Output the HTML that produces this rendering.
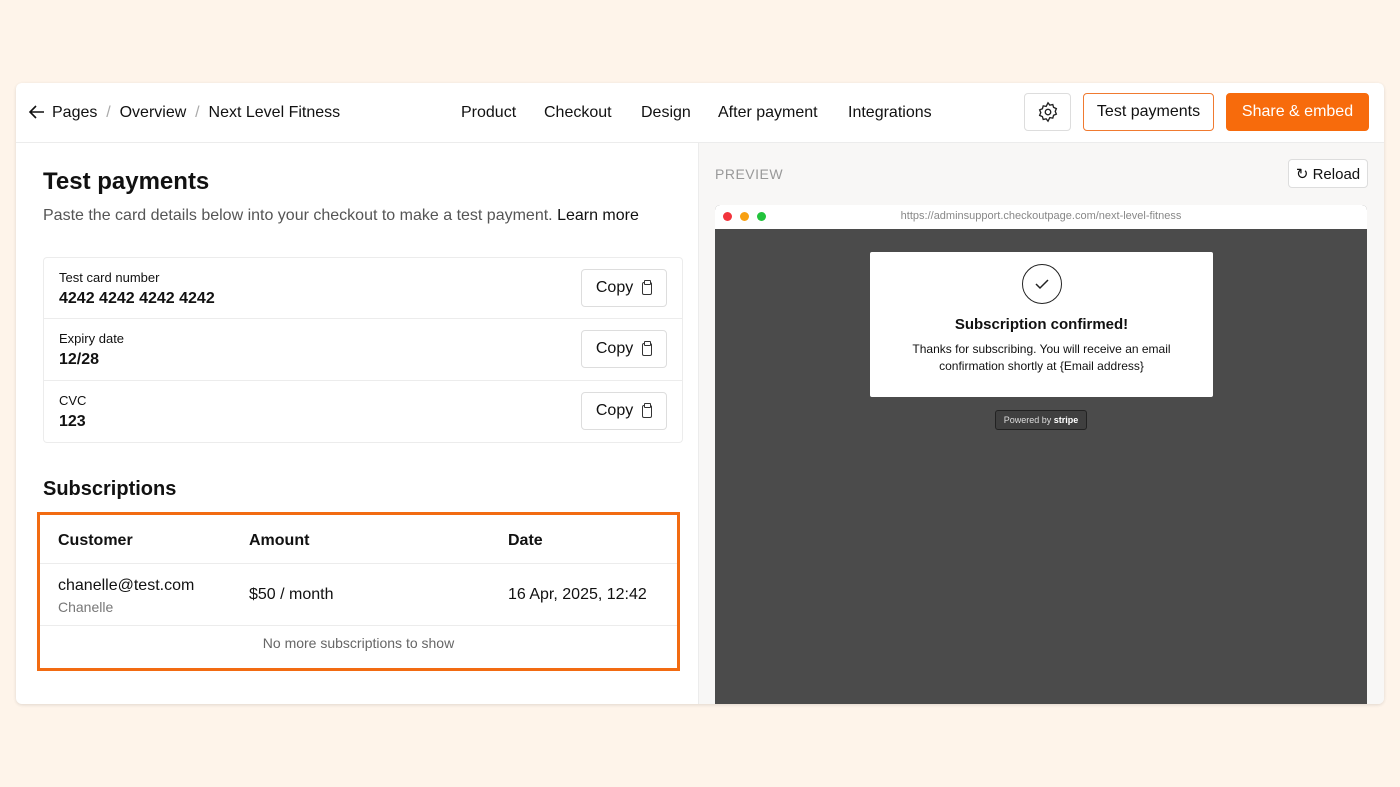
<!DOCTYPE html><html><head><style>
*{box-sizing:border-box;margin:0;padding:0}
body{width:1400px;height:787px;background:#fef4ea;font-family:"Liberation Sans",sans-serif;color:#111;position:relative;overflow:hidden}
.card{position:absolute;left:16px;top:83px;width:1368px;height:621px;background:#fff;border-radius:6px;box-shadow:0 1px 3px rgba(0,0,0,.12);overflow:hidden}
.hdr{position:absolute;left:0;top:0;width:100%;height:60px;border-bottom:1px solid #ececec}
.a{position:absolute;font-size:16px;top:21px}
.gray{color:#aaa}
.btn{position:absolute;border:1px solid #ddd;border-radius:4px;background:#fff;display:flex;align-items:center;justify-content:center;font-size:16px}
.right{position:absolute;left:682px;top:60px;right:0;bottom:0;background:#f8f7f6;border-left:1px solid #ececec}
.row{position:absolute;left:27px;width:640px;height:62px;border:1px solid #ececec}
.row .l{position:absolute;left:15px;top:12px;font-size:13px}
.row .v{position:absolute;left:15px;top:32px;font-size:16px;font-weight:bold}
.row .btn{right:15px;top:11px;width:86px;height:38px}
.clip{display:inline-block;width:10px;height:13px;border:1.5px solid #333;border-radius:2px;position:relative}
.clip:after{content:"";position:absolute;left:1px;top:-3px;width:5px;height:3px;border:1.2px solid #333;background:#fff;border-radius:1px}
</style></head><body>
<div class="card">
<div class="hdr">
<svg style="position:absolute;left:12px;top:21px" width="18" height="16" viewBox="0 0 18 16"><path d="M16 8H2M8 2L2 8l6 6" stroke="#111" stroke-width="1.6" fill="none"/></svg>
<div class="a" style="left:36px">Pages <span class="gray">&nbsp;/&nbsp;</span> Overview <span class="gray">&nbsp;/&nbsp;</span> Next Level Fitness</div>
<div class="a" style="left:445px">Product</div>
<div class="a" style="left:528px">Checkout</div>
<div class="a" style="left:625px">Design</div>
<div class="a" style="left:702px">After payment</div>
<div class="a" style="left:832px">Integrations</div>
<div class="btn" style="left:1008px;top:10px;width:47px;height:38px"><svg width="22" height="22" viewBox="0 0 24 24" fill="none" stroke="#222" stroke-width="1.5"><circle cx="12" cy="12" r="3"/><path d="M12 2l2 2.5 3.2-.6.9 3.1 3 1.3-1.2 3 1.2 3-3 1.300-.9 3.1-3.2-.6L12 22l-2-2.5-3.2.6-.9-3.1-3-1.3 1.2-3-1.2-3 3-1.3.9-3.1 3.2.6z"/></svg></div>
<div class="btn" style="left:1067px;top:10px;width:131px;height:38px;border-color:#f07a30">Test payments</div>
<div class="btn" style="left:1210px;top:10px;width:143px;height:38px;background:#f76b0c;border-color:#f76b0c;color:#fff">Share &amp; embed</div>
</div>
<div style="position:absolute;left:27px;top:85px;font-size:24px;font-weight:bold">Test payments</div>
<div style="position:absolute;left:27px;top:124px;font-size:16px;color:#555">Paste the card details below into your checkout to make a test payment. <span style="color:#111">Learn more</span></div>
<div class="row" style="top:174px;border-radius:4px 4px 0 0"><div class="l">Test card number</div><div class="v">4242 4242 4242 4242</div><div class="btn">Copy&nbsp;&nbsp;<span class="clip"></span></div></div>
<div class="row" style="top:236px;border-top:none;height:62px"><div class="l">Expiry date</div><div class="v">12/28</div><div class="btn">Copy&nbsp;&nbsp;<span class="clip"></span></div></div>
<div class="row" style="top:298px;border-top:none;border-radius:0 0 4px 4px"><div class="l">CVC</div><div class="v">123</div><div class="btn">Copy&nbsp;&nbsp;<span class="clip"></span></div></div>
<div style="position:absolute;left:27px;top:395px;font-size:20px;font-weight:bold">Subscriptions</div>
<div style="position:absolute;left:21px;top:429px;width:643px;height:159px;border:3px solid #f26b12">
<div style="position:absolute;left:0;right:0;top:0;height:49px;border-bottom:1px solid #ececec;font-size:16px;font-weight:bold">
<span style="position:absolute;left:18px;top:17px">Customer</span><span style="position:absolute;left:209px;top:17px">Amount</span><span style="position:absolute;left:468px;top:17px">Date</span></div>
<div style="position:absolute;left:18px;top:62px;font-size:16px">chanelle@test.com</div>
<div style="position:absolute;left:18px;top:84px;font-size:14px;color:#777">Chanelle</div>
<div style="position:absolute;left:209px;top:71px;font-size:16px">$50 / month</div>
<div style="position:absolute;left:468px;top:71px;font-size:16px">16 Apr, 2025, 12:42</div>
<div style="position:absolute;left:0;right:0;top:110px;border-top:1px solid #ececec;text-align:center;font-size:14px;color:#666;padding-top:9px">No more subscriptions to show</div>
</div>
<div class="right">
<div style="position:absolute;left:16px;top:23px;font-size:14px;color:#999;letter-spacing:.5px">PREVIEW</div>
<div class="btn" style="right:16px;top:16px;width:80px;height:29px;font-size:15px">&#x21bb; Reload</div>
<div style="position:absolute;left:16px;top:62px;width:652px;height:499px;background:#4b4b4b;border-radius:5px 5px 0 0;overflow:hidden">
<div style="height:24px;background:#fff;position:relative">
<span style="position:absolute;left:8px;top:7px;width:9px;height:9px;border-radius:50%;background:#f2343c"></span>
<span style="position:absolute;left:25px;top:7px;width:9px;height:9px;border-radius:50%;background:#f8a012"></span>
<span style="position:absolute;left:42px;top:7px;width:9px;height:9px;border-radius:50%;background:#22c33c"></span>
<div style="text-align:center;font-size:11px;color:#888;padding-top:5px">https://adminsupport.checkoutpage.com/next-level-fitness</div></div>
<div style="position:absolute;left:155px;top:47px;width:343px;height:145px;background:#fff;border-radius:2px;text-align:center">
<div style="margin:12px auto 0;width:40px;height:40px;border:1.5px solid #222;border-radius:50%;display:flex;align-items:center;justify-content:center"><svg width="16" height="12" viewBox="0 0 16 12"><path d="M2 6l4 4 8-8" stroke="#222" stroke-width="1.5" fill="none"/></svg></div>
<div style="font-size:15px;font-weight:bold;margin-top:12px">Subscription confirmed!</div>
<div style="font-size:12px;line-height:17px;margin-top:8px">Thanks for subscribing. You will receive an email<br>confirmation shortly at {Email address}</div></div>
<div style="position:absolute;left:280px;top:205px;width:92px;height:20px;border:1px solid #222;border-radius:3px;background:#3f3f3f;font-size:9px;color:#ddd;text-align:center;line-height:18px">Powered by <b style="color:#fff">stripe</b></div>
</div></div>
</div>
</body></html>
